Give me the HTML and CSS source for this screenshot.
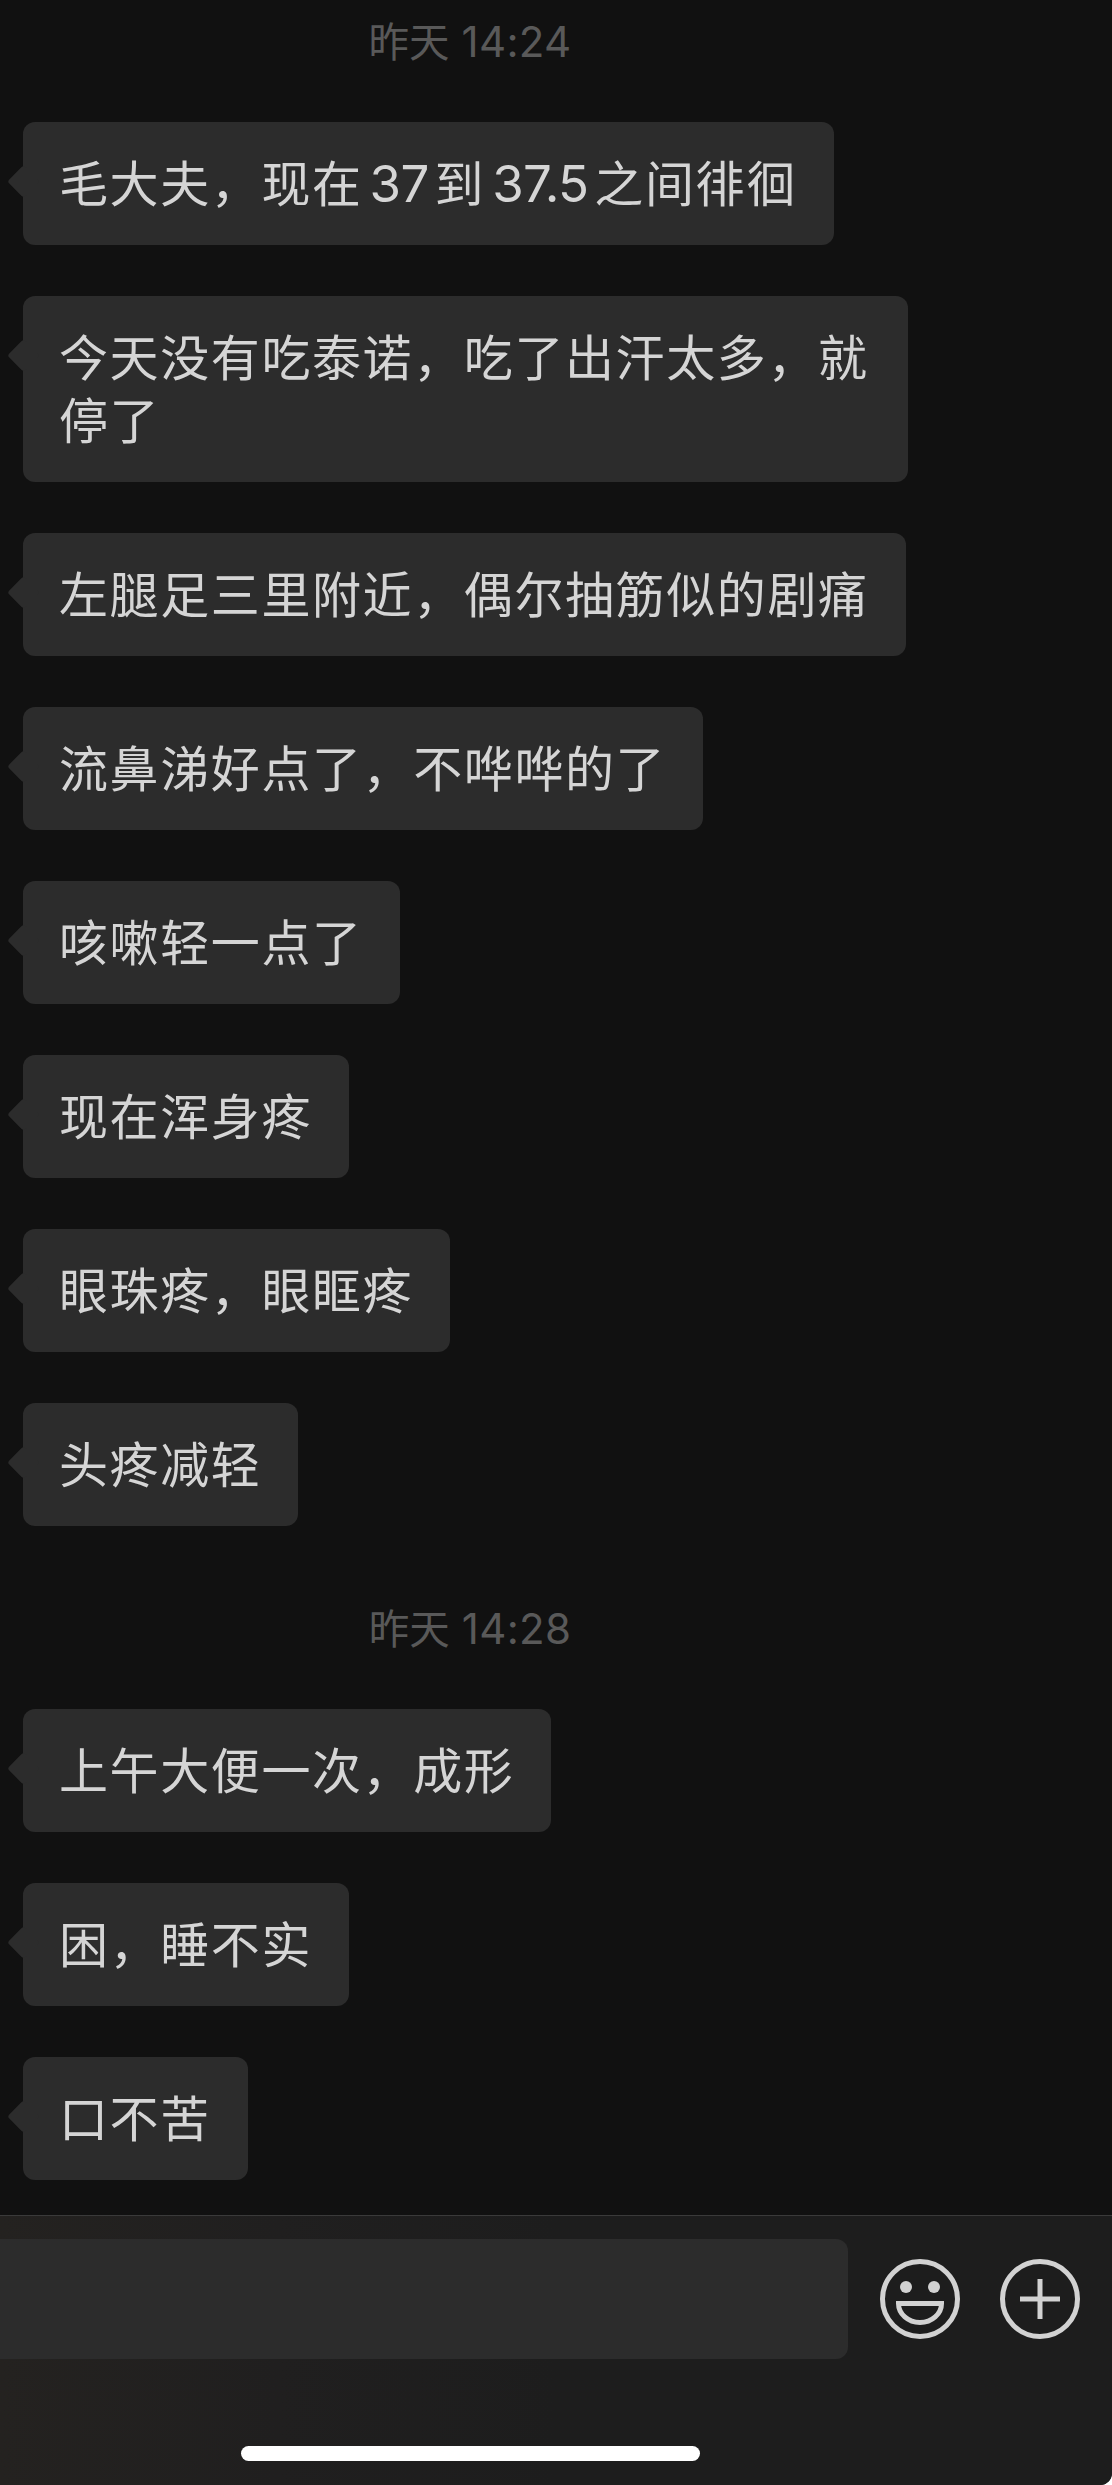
FILE: index.html
```html
<!DOCTYPE html>
<html lang="zh-CN">
  <head>
    <meta charset="UTF-8" />
    <meta name="viewport" content="width=device-width, initial-scale=1.0" />
    <title>聊天</title>
    <link rel="stylesheet" href="styles.css">
  </head>
  <body>
    <div class="screen">
      <main class="messages">
        <p class="time">昨天 <span class="clock">14:24</span></p>
        <p class="bubble">毛大夫，现在<span class="num">37</span>到<span class="num">37.5</span>之间徘徊</p>
        <p class="bubble wide">今天没有吃泰诺，吃了出汗太多，就停了</p>
        <p class="bubble">左腿足三里附近，偶尔抽筋似的剧痛</p>
        <p class="bubble">流鼻涕好点了，不哗哗的了</p>
        <p class="bubble">咳嗽轻一点了</p>
        <p class="bubble">现在浑身疼</p>
        <p class="bubble">眼珠疼，眼眶疼</p>
        <p class="bubble">头疼减轻</p>

        <p class="time">昨天 <span class="clock">14:28</span></p>
        <p class="bubble">上午大便一次，成形</p>
        <p class="bubble">困，睡不实</p>
        <p class="bubble">口不苦</p>
      </main>

      <footer class="toolbar">
        <div class="input-row">
          <div class="input"></div>
          <!-- Emoji button -->
          <svg class="icon" viewBox="0 0 80 80">
            <circle cx="40" cy="40" r="37.5" />
            <circle class="eye" cx="26" cy="28" r="6" />
            <circle class="eye" cx="54" cy="28" r="6" />
            <path d="M18.5 44.5h43a21.5 19 0 0 1-43 0z" />
          </svg>
          <!-- More button -->
          <svg class="icon" viewBox="0 0 80 80">
            <circle cx="40" cy="40" r="37.5" />
            <path d="M40 20v40M20 40h40" />
          </svg>
        </div>
        <div class="home-indicator"></div>
      </footer>
    </div>
  </body>
</html>
```
FILE: styles.css
```css
body {
  margin: 0;
  background-color: #fff;
  font-family: "Noto Sans CJK SC", sans-serif;
}

.screen {
  display: flex;
  flex-direction: column;
  width: 1112px;
  height: 2485px;
  background-color: #111;
  border-bottom-right-radius: 12px;
  overflow: hidden;
}

.messages {
  flex: 1;
  display: flex;
  flex-direction: column;
  align-items: flex-start;
  gap: 51px;
  padding-left: 23px;
}

/* Timestamps */
.time {
  width: 894px;
  height: 60px;
  margin: 20px 0 0;
  color: #595959;
  font-size: 40.5px;
  line-height: 57px;
  text-align: center;
}

.time:first-child {
  margin-top: 11px;
}

.clock {
  margin-left: 3px;
  font-family: Inter, sans-serif;
  font-size: 42px;
  letter-spacing: 0.3px;
}

/* Message bubbles */
.bubble {
  position: relative;
  box-sizing: border-box;
  margin: 0;
  padding: 27px 37px 33px 36px;
  border-radius: 12px;
  background-color: #2c2c2c;
  color: #d5d5d5;
  font-size: 49px;
  line-height: 63px;
  letter-spacing: 1.6px;
}

.bubble.wide {
  width: 885px;
}

.time + .bubble {
  margin-top: 0;
}

.bubble + .time {
  margin-top: 21px;
}

.bubble::before {
  content: "";
  position: absolute;
  left: -11px;
  top: 48px;
  width: 23px;
  height: 23px;
  border-radius: 3px;
  background-color: #2c2c2c;
  transform: rotate(45deg);
}

.num {
  margin: 0 6px 0 7px;
  font-family: Inter, sans-serif;
  font-size: 51px;
  line-height: 1;
  letter-spacing: -0.7px;
}

/* Bottom bar */
.toolbar {
  box-sizing: border-box;
  height: 270px;
  padding-top: 23px;
  border-top: 1px solid #3a3a3a;
  background: linear-gradient(to right, #242220, #201f1f 25%, #1d1d1d 50%);
}

.input-row {
  display: flex;
  align-items: center;
  gap: 40px;
}

.input {
  width: 848px;
  height: 120px;
  margin-right: -8px;
  border-radius: 0 12px 12px 0;
  background-color: #2c2c2c;
}

.icon {
  width: 80px;
  height: 80px;
  fill: none;
  stroke: #d2d2d2;
  stroke-width: 5;
}

.icon .eye {
  fill: #d2d2d2;
  stroke: none;
}

.home-indicator {
  width: 459px;
  height: 15px;
  margin: 87px 0 0 241px;
  border-radius: 8px;
  background-color: #fff;
}
```
